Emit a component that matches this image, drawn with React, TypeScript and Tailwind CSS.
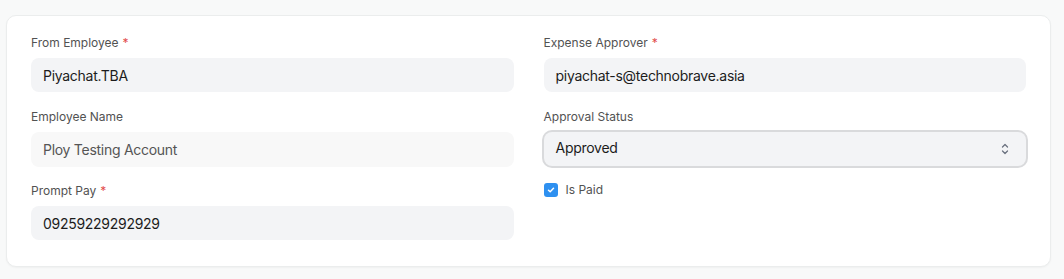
export default function App() {
  const font = { fontFamily: "Inter, 'Noto Sans', sans-serif" };

  const Label = ({ text, required }: { text: string; required?: boolean }) => (
    <div className="h-4 mb-[7px] text-[12px] leading-4 text-[#525252]">
      {text}
      {required && <span className="ml-1 text-[#e24c4c]">*</span>}
    </div>
  );

  return (
    <div className="min-h-[279px] w-[1064px] bg-[#f8f9f9] pt-[15px]" style={font}>
      <div className="ml-[6px] h-[252px] w-[1045px] rounded-[10px] border border-[#ebeded] bg-white px-[24px] pt-[19px] shadow-[0_1px_2px_rgba(0,0,0,0.04)]">
        <div className="grid grid-cols-2 gap-x-[30px]">
          <div className="flex flex-col">
            <Label text="From Employee" required />
            <div className="flex h-[34px] items-center rounded-lg bg-[#f3f4f6] px-3 text-[14px] tracking-[-0.02em] text-[#1c1c1c]">
              Piyachat.TBA
            </div>
            <div className="mt-[17px]">
              <Label text="Employee Name" />
              <div className="flex h-[35px] items-center rounded-lg bg-[#f8f8f8] px-3 text-[14px] tracking-[-0.02em] text-[#555]">
                Ploy Testing Account
              </div>
            </div>
            <div className="mt-[16px]">
              <Label text="Prompt Pay" required />
              <div className="flex h-[34px] items-center rounded-lg bg-[#f3f4f6] px-3 text-[14px] tracking-[-0.02em] text-[#1c1c1c]">
                09259229292929
              </div>
            </div>
          </div>
          <div className="flex flex-col">
            <Label text="Expense Approver" required />
            <div className="flex h-[34px] items-center rounded-lg bg-[#f3f4f6] px-3 text-[14px] tracking-[-0.02em] text-[#1c1c1c]">
              piyachat-s@technobrave.asia
            </div>
            <div className="mt-[17px]">
              <Label text="Approval Status" />
              <div className="flex h-[34px] items-center justify-between rounded-lg bg-[#f3f4f6] px-3 text-[14px] leading-none tracking-[-0.02em] text-[#1c1c1c] ring-2 ring-[#d9dadc]">
                <span className="-mt-[2px]">Approved</span>
                <svg width="10" height="14" viewBox="0 0 10 14" fill="none" stroke="#6b7280" strokeWidth="1.3" strokeLinecap="round" strokeLinejoin="round" className="mr-[4px]">
                  <path d="M2.5 5 L5 2.5 L7.5 5" />
                  <path d="M2.5 9 L5 11.5 L7.5 9" />
                </svg>
              </div>
            </div>
            <div className="mt-[15px] flex items-center gap-2">
              <div className="flex h-[14px] w-[14px] items-center justify-center rounded-[3px] bg-[#2e90f0]">
                <svg width="10" height="10" viewBox="0 0 10 10" fill="none" stroke="white" strokeWidth="1.5" strokeLinecap="round" strokeLinejoin="round">
                  <path d="M2.5 5.2 L4.2 6.8 L7.5 3.3" />
                </svg>
              </div>
              <span className="text-[12px] text-[#525252]">Is Paid</span>
            </div>
          </div>
        </div>
      </div>
    </div>
  );
}
